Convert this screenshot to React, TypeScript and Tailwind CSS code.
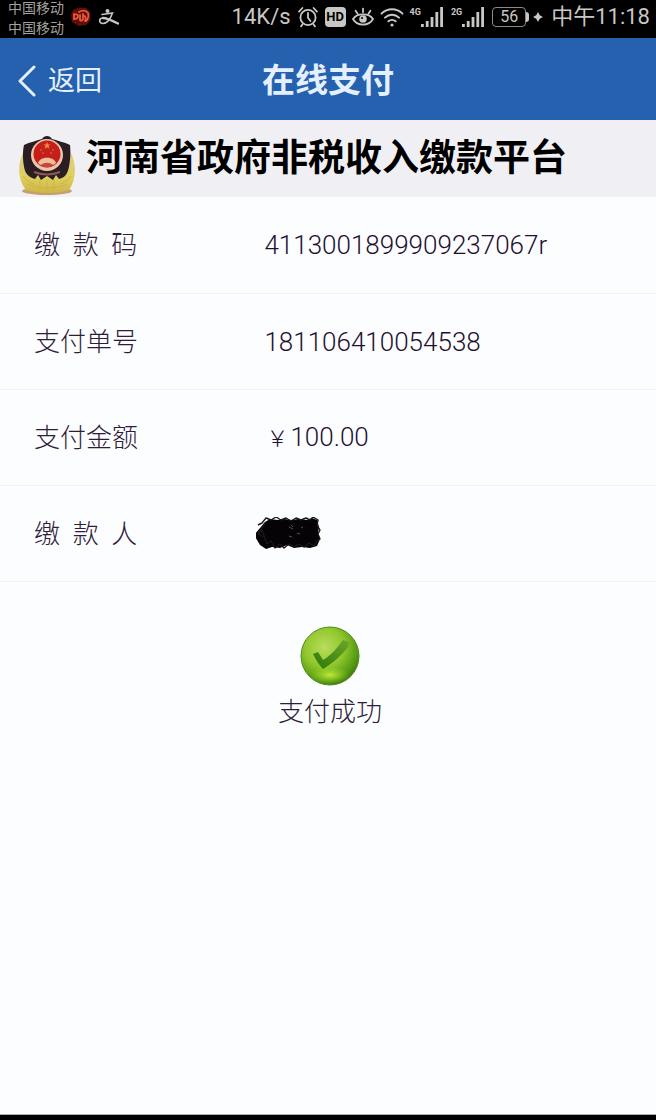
import type { ReactNode } from 'react'

function AlarmIcon() {
  return (
    <svg viewBox="0 0 22 22" className="w-[22px] h-[22px]" fill="none" stroke="currentColor" strokeWidth="1.8" strokeLinecap="round" aria-hidden="true">
      <circle cx="11" cy="11.5" r="7.6" />
      <path d="M11 7v4.8l2.4 3.2M2 5.6 5.4 2M20 5.6 16.6 2M5.4 18.4 4 20.4M16.6 18.4l1.4 2" />
    </svg>
  )
}

function EyeIcon() {
  return (
    <svg viewBox="0 0 22 22" className="w-[22px] h-[22px]" fill="none" stroke="currentColor" strokeWidth="1.8" strokeLinecap="round" aria-hidden="true">
      <path d="M1 13C5 6.8 17 6.8 21 13 17 20.4 5 20.4 1 13Z" />
      <path d="M11 2.6v3.6M3.6 4.8l2 3M18.4 4.8l-2 3" />
      <circle cx="11" cy="13" r="3.8" fill="currentColor" stroke="none" />
      <circle cx="10" cy="12" r="1" fill="#000" stroke="none" />
    </svg>
  )
}

function WifiIcon() {
  return (
    <svg viewBox="0 0 24 20" className="w-6 h-5" fill="none" stroke="currentColor" strokeWidth="2" strokeLinecap="round" aria-hidden="true">
      <path d="M1.5 6.6C7.5.8 16.5.8 22.5 6.6M5 10.6c4-3.8 10-3.8 14 0M8.4 14.3c2-1.9 5.2-1.9 7.2 0" />
      <circle cx="12" cy="18" r="1.6" fill="currentColor" stroke="none" />
    </svg>
  )
}

function Signal({ label }: { label: string }) {
  return (
    <div className="flex">
      <span className="text-[9px] leading-[10px] font-bold">{label}</span>
      <svg viewBox="0 0 22 20" className="w-[22px] h-5" fill="currentColor" aria-hidden="true">
        <path d="M0 17h2.8v3H0zM4.8 14h2.8v6H4.8zM9.6 10h2.8v10H9.6zM14.4 5h2.8v15h-2.8zM19.2 0H22v20h-2.8z" />
      </svg>
    </div>
  )
}

function StatusBar() {
  return (
    <div className="h-[38px] bg-black text-[#c9c7c4] flex items-center justify-between pl-2 pr-1.5 overflow-hidden">
      <div className="flex items-center h-full">
        <div className="self-end text-[14px] leading-5 text-[#a3a19f]">
          <p>中国移动</p>
          <p>中国移动</p>
        </div>
        <svg viewBox="0 0 22 22" className="w-[22px] h-[22px] ml-1.5 mb-1" aria-hidden="true">
          <path d="M3 4 9 1.5l7 .5 4 4 .5 8-4 5-8 1L2 16 1 9Z" fill="#5e0f08" />
          <path d="M4 9c1-1 4-1 4 1s-2 3-4 3V8M9 6c3-2 7-2 9 1 1 3 0 6-2 8M10 9v5c1 1 2 1 3-1V8M14 10c2 0 2 3 1 5" fill="none" stroke="#e8573e" strokeWidth="1.8" strokeLinecap="round" />
        </svg>
        <svg viewBox="0 0 22 18" className="w-[22px] h-[18px] ml-1.5 mb-1" fill="none" stroke="currentColor" strokeLinecap="round" aria-hidden="true">
          <circle cx="9.5" cy="3" r="2" fill="currentColor" stroke="none" />
          <path d="M4 6.5 14.5 5C12.5 10.5 9 15.5 5 15.5c-4.5 0-4.5-5.5 0-5.5" strokeWidth="1.6" />
          <path d="M5 10c4 0 8 2 15 5.5" strokeWidth="2.4" />
        </svg>
      </div>

      <div className="flex items-center gap-1.5 text-[22px] leading-8 pb-1">
        <span>14K/s</span>
        <AlarmIcon />
        <span className="w-[21px] h-5 rounded bg-[#c9c7c4] text-black text-[13px] leading-5 font-bold text-center">HD</span>
        <EyeIcon />
        <WifiIcon />
        <div className="flex items-center gap-2">
          <Signal label="4G" />
          <Signal label="2G" />
          <div className="flex items-center">
            <span className="w-[34px] h-5 border border-[#8d8b88] rounded text-[16px] leading-[18px] text-center">56</span>
            <span className="w-[3px] h-2.5 bg-[#c9c7c4] rounded-r" />
            <svg viewBox="0 0 10 10" className="w-2.5 h-2.5 ml-1" fill="currentColor" aria-hidden="true">
              <path d="M5 0 6.8 3.2 10 5 6.8 6.8 5 10 3.2 6.8 0 5l3.2-1.8Z" />
            </svg>
          </div>
          <span>中午11:18</span>
        </div>
      </div>
    </div>
  )
}

function PoliceBadge() {
  return (
    <svg viewBox="0 0 58 60" className="w-[58px] h-[60px] shrink-0 mt-3.5" role="img" aria-label="警徽">
      <defs>
        <linearGradient id="gold" x1="0" y1="0" x2="0" y2="1">
          <stop offset="0" stopColor="#d9d08c" />
          <stop offset="0.6" stopColor="#decf5c" />
          <stop offset="1" stopColor="#cfb548" />
        </linearGradient>
      </defs>
      <ellipse cx="29" cy="55" rx="25" ry="4" fill="#c2a26c" />
      <path d="M5 17C-1 29 0 44 8 54c12 4 32 4 43 0 7-10 8-25 2-37Z" fill="url(#gold)" />
      <path d="M9 48c12 5 29 5 41 0M5 40c3 4 7 7 11 8M53 40c-3 4-7 7-11 8M22 44v9M29 44v10M36 44v9" stroke="#cbb546" strokeWidth="1" fill="none" />
      <path d="M29 0c2 0 4 1 5 3 6 2 12 3 18 6 1 8 0 22-3 28-2 4-5 5-8 6l-3-4-3 5-6-4-6 4-3-5-3 4c-4-1-7-3-9-6C5 31 4 17 6 9c6-3 12-4 18-6 1-2 3-3 5-3Z" fill="#2b1d24" />
      <circle cx="29" cy="19" r="16" fill="#edc5a8" />
      <circle cx="29" cy="18" r="13.5" fill="#c51f1c" />
      <path d="m29 6 1 2.5h2.6l-2 1.6.8 2.6-2.4-1.5-2.4 1.5.8-2.6-2-1.6H28Z" fill="#e88a45" />
      <path d="M22 14h2M34 14h2M24 17h2M32 17h2" stroke="#e07035" strokeWidth="1.2" />
      <path d="M20 27c2-7 16-7 18 0-3 4-15 4-18 0Z" fill="#edc09c" />
      <path d="M23 29c3-3 9-3 12 0-2 3-10 3-12 0Z" fill="#c9473a" />
      <path d="M16 36c8 3 18 3 26 0" stroke="#8a5a50" strokeWidth="2" fill="none" />
    </svg>
  )
}

// 涂黑的姓名
function Scribble() {
  return (
    <svg viewBox="0 0 66 34" className="w-[66px] h-[34px] -ml-2" role="img" aria-label="已隐藏">
      <path d="M9 5 14 2l8 1 6-1 8 1 6-1 9 1 5-2 5 2 2 7-1 6 2 6-3 7-7 2-8-1-8 1-7-3-7 3-8-1-6 2-6-4-6-10Z" fill="#050306" />
      <path d="M9 6 2 17l5 3M2 17l4-4 5 14 4-3 4 7 5-4 4 4 5-4 5 3 5-3 5 3 5-4 5 3 3-5 3-2-2-5 2-4-3-5 1-5-5-3-3 3-4-2-5 2-5-2-5 3-5-3-5 2-5-3-5 3-5-2-4 5-4 2" fill="none" stroke="#1b171d" strokeWidth="1.4" strokeLinejoin="round" />
      <path d="m33 10 4 2m4 4 3 1m-11 2 3 1m-1-12 2 2m8 1 2-1" stroke="#56515c" strokeWidth="1" />
    </svg>
  )
}

function SuccessIcon() {
  return (
    <svg viewBox="0 0 60 60" className="w-[60px] h-[60px]" aria-hidden="true">
      <defs>
        <radialGradient id="ball" cx="0.4" cy="0.35" r="0.68">
          <stop offset="0" stopColor="#b9dc5c" />
          <stop offset="0.5" stopColor="#91c72c" />
          <stop offset="0.85" stopColor="#559a12" />
          <stop offset="1" stopColor="#3d7a10" />
        </radialGradient>
        <linearGradient id="tick" x1="0" y1="1" x2="1" y2="0">
          <stop offset="0" stopColor="#2c7808" />
          <stop offset="1" stopColor="#6ca52c" />
        </linearGradient>
        <radialGradient id="glow">
          <stop offset="0" stopColor="#c8ef42" stopOpacity="0.9" />
          <stop offset="1" stopColor="#9ad21e" stopOpacity="0" />
        </radialGradient>
      </defs>
      <circle cx="30" cy="30" r="29" fill="url(#ball)" stroke="#4f8a20" strokeWidth="1" />
      <ellipse cx="30" cy="49" rx="20" ry="9" fill="url(#glow)" />
      <path d="m13 28 5-2 5 8c7-4 13-10 20-20l6 2-1 5C41 30 33 37 23 43c-4-4-7-9-10-15Z" fill="url(#tick)" />
    </svg>
  )
}

const rows: { label: string; value: ReactNode }[] = [
  { label: '缴  款  码', value: '4113001899909237067r' },
  { label: '支付单号', value: '181106410054538' },
  {
    label: '支付金额',
    value: <><span className="inline-block w-[26px] text-center text-[22px]">￥</span>100.00</>,
  },
  { label: '缴  款  人', value: <Scribble /> },
]

export default function App() {
  return (
    <div className="min-h-screen flex flex-col bg-[#fcfdff] text-[#1f1030] font-[Roboto,'Noto_Sans_CJK_SC',sans-serif]">
      <StatusBar />

      <header className="h-[82px] pt-1 bg-[#2561ae] text-[#e4f0ff] grid grid-cols-3 items-center">
        <button className="flex items-center gap-3 pl-[18px] text-[27px] leading-9 justify-self-start">
          <svg viewBox="0 0 18 32" className="w-[18px] h-8" fill="none" stroke="currentColor" strokeWidth="3" strokeLinecap="round" strokeLinejoin="round" aria-hidden="true">
            <path d="M16 2 2 16l14 14" />
          </svg>
          返回
        </button>
        <h1 className="text-[33px] leading-10 font-bold text-center whitespace-nowrap">在线支付</h1>
      </header>

      <div className="h-[77px] bg-[#f0f0f4] flex items-center gap-2.5 pl-[18px]">
        <PoliceBadge />
        <h2 className="text-[37px] leading-[48px] font-bold text-black whitespace-nowrap">河南省政府非税收入缴款平台</h2>
      </div>

      <main className="flex-1">
        <dl className="text-[26px] leading-9 font-light">
          {rows.map(row => (
            <div key={row.label} className="h-24 flex items-center border-b border-[#f0f3f8] first:h-[97px]">
              <dt className="w-2/5 pl-[34px] text-[#2f1c3a] whitespace-pre">{row.label}</dt>
              <dd className="pl-0.5">{row.value}</dd>
            </div>
          ))}
        </dl>

        <div className="flex flex-col items-center pt-11 pl-1 gap-2">
          <SuccessIcon />
          <p className="text-[26px] leading-9 font-light text-[#2f1c3a]">支付成功</p>
        </div>
      </main>

      <footer className="h-1.5 bg-black border-t border-[#a9adc0]" />
    </div>
  )
}
